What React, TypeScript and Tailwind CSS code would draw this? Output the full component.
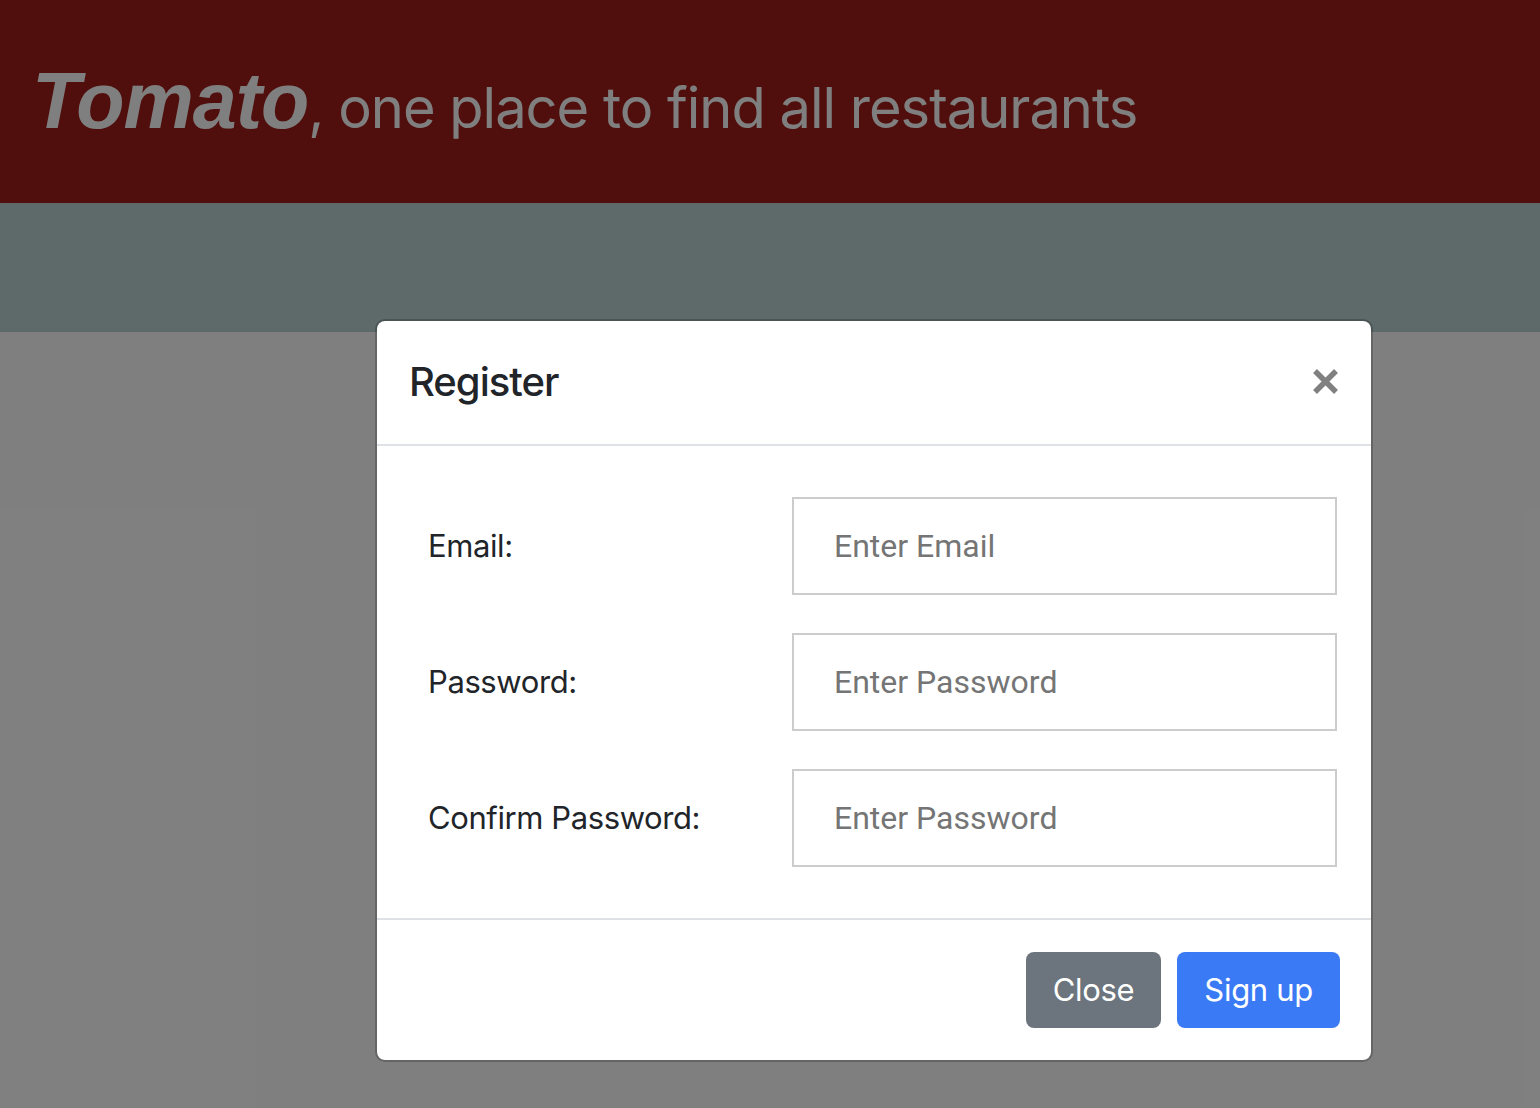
import { useState } from 'react';

const fields = [
  { id: 'email', label: 'Email:', placeholder: 'Enter Email', type: 'email' },
  { id: 'password', label: 'Password:', placeholder: 'Enter Password', type: 'password' },
  { id: 'confirm', label: 'Confirm Password:', placeholder: 'Enter Password', type: 'password' },
];

function RegisterModal() {
  return (
    <div className="absolute left-[375px] top-[319px] w-[998px] rounded-[10px] border-2 border-black/20 bg-white bg-clip-padding font-['Inter',sans-serif] text-[#212529]">
      <div className="flex items-start justify-between border-b-2 border-[#dee2e6] px-[32px] pt-[31px] pb-[32px]">
        <h5 className="text-[40px] font-medium leading-[60px] tracking-[-1px]">Register</h5>
        <button type="button" aria-label="Close" className="mt-[16px] text-[#808080]">
          <svg width="27" height="27" viewBox="0 0 27 27">
            <path d="M3 3 L24 24 M24 3 L3 24" stroke="currentColor" strokeWidth="5.5" />
          </svg>
        </button>
      </div>
      <div className="flex flex-col gap-[38px] px-[32px] py-[51px]">
        {fields.map((f) => (
          <div key={f.id} className="flex items-center">
            <label htmlFor={f.id} className="w-[383px] shrink-0 pl-[19px] text-[31px] leading-[48px] tracking-[-0.4px]">
              {f.label}
            </label>
            <input
              id={f.id}
              type={f.type}
              placeholder={f.placeholder}
              className="h-[98px] w-[545px] shrink-0 border-2 border-[#cccccc] bg-white px-[40px] font-['Roboto',sans-serif] text-[32px] outline-none placeholder:text-[#757575]"
            />
          </div>
        ))}
      </div>
      <div className="flex items-center justify-end gap-[16px] border-t-2 border-[#dee2e6] px-[31px] py-[32px]">
        <button type="button" className="h-[76px] rounded-[8px] bg-[#6c757d] px-[27px] text-[31px] leading-[48px] tracking-[-0.3px] text-white">
          Close
        </button>
        <button type="button" className="h-[76px] rounded-[8px] bg-[#3a7bf5] px-[27px] text-[31px] leading-[48px] tracking-[-0.3px] text-white">
          Sign up
        </button>
      </div>
    </div>
  );
}

export default function App() {
  const [open] = useState(true);
  return (
    <div className="relative h-[1108px] w-[1540px] overflow-hidden bg-white">
      <header className="flex h-[203px] items-center bg-[#a01e18] px-[32px] text-white">
        <h1 className="whitespace-nowrap">
          <span className="font-['Liberation_Sans',sans-serif] text-[79px] font-bold italic tracking-[-1px]">Tomato</span>
          <span className="font-['Inter',sans-serif] text-[56px] tracking-[-1px]">, one place to find all restaurants</span>
        </h1>
      </header>
      <div className="h-[129px] bg-[#bcd2d4]" />
      {open && (
        <>
          <div className="absolute inset-0 bg-black/50" />
          <RegisterModal />
        </>
      )}
    </div>
  );
}
